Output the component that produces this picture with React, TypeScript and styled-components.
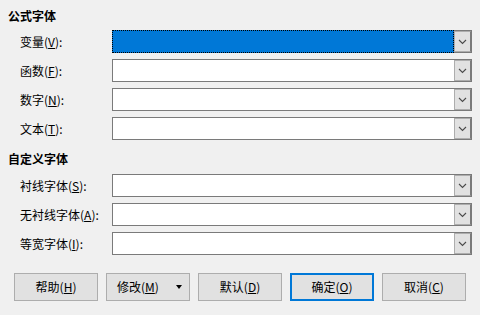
import styled, { createGlobalStyle } from "styled-components";

const GlobalStyle = createGlobalStyle`
  html, body {
    margin: 0;
    padding: 0;
    background: #f0f0f0;
  }
  body {
    font-family: "Noto Sans CJK SC", "Noto Sans", sans-serif;
    font-size: 12px;
    color: #000;
  }
`;

type Field = { label: string; key: string; focused?: boolean };

const formulaFonts: Field[] = [
  { label: "变量", key: "V", focused: true },
  { label: "函数", key: "F" },
  { label: "数字", key: "N" },
  { label: "文本", key: "T" },
];

const customFonts: Field[] = [
  { label: "衬线字体", key: "S" },
  { label: "无衬线字体", key: "A" },
  { label: "等宽字体", key: "I" },
];

const Chevron = () => (
  <svg width="9" height="6" viewBox="0 0 9 6">
    <polyline points="1,1 4.5,4.5 8,1" fill="none" stroke="#4a4a4a" strokeWidth="1.1" />
  </svg>
);

const FieldRow = ({ field }: { field: Field }) => (
  <Row>
    <Label>
      {field.label}(<u>{field.key}</u>):
    </Label>
    <Combo>
      <Edit $focused={field.focused} />
      <DropButton>
        <Chevron />
      </DropButton>
    </Combo>
  </Row>
);

const Caption = ({ text, k }: { text: string; k: string }) => (
  <span>
    {text}(<u>{k}</u>)
  </span>
);

export default function App() {
  return (
    <>
      <GlobalStyle />
      <Dialog>
        <Heading>公式字体</Heading>
        <Rows>
          {formulaFonts.map((f) => (
            <FieldRow key={f.key} field={f} />
          ))}
        </Rows>
        <Heading $second>自定义字体</Heading>
        <Rows>
          {customFonts.map((f) => (
            <FieldRow key={f.key} field={f} />
          ))}
        </Rows>
        <ButtonBar>
          <Button>
            <Caption text="帮助" k="H" />
          </Button>
          <Button $split>
            <Caption text="修改" k="M" />
            <Caret />
          </Button>
          <Button>
            <Caption text="默认" k="D" />
          </Button>
          <Button $default>
            <Caption text="确定" k="O" />
          </Button>
          <Button>
            <Caption text="取消" k="C" />
          </Button>
        </ButtonBar>
      </Dialog>
    </>
  );
}

const Dialog = styled.div`
  width: 480px;
  height: 315px;
  box-sizing: border-box;
  padding: 8px 8px 0 8px;
  display: flex;
  flex-direction: column;
`;

const Heading = styled.div<{ $second?: boolean }>`
  font-weight: 700;
  line-height: 16px;
  height: 16px;
  margin-top: ${(p) => (p.$second ? "11px" : "0")};
  margin-bottom: ${(p) => (p.$second ? "7px" : "6px")};
`;

const Rows = styled.div`
  display: flex;
  flex-direction: column;
  gap: 6px;
`;

const Row = styled.div`
  display: grid;
  grid-template-columns: 92px 360px;
  padding-left: 12px;
  align-items: center;
  height: 23px;
`;

const Label = styled.div`
  line-height: 16px;
  white-space: nowrap;
`;

const Combo = styled.div`
  display: flex;
  height: 23px;
  box-sizing: border-box;
  border: 1px solid #7a7a7a;
  background: #fff;
`;

const Edit = styled.div<{ $focused?: boolean }>`
  flex: 1;
  box-sizing: border-box;
  ${(p) =>
    p.$focused &&
    `
    margin: -1px 0 -1px -1px;
    border: 1px dotted #000;
    background: #0078d7;
    box-shadow: inset 0 0 0 1px #0078d7;
  `}
`;

const DropButton = styled.div`
  width: 17px;
  box-sizing: border-box;
  background: #e1e1e1;
  border: 1px solid #adadad;
  border-right-color: #7a7a7a;
  display: flex;
  align-items: center;
  justify-content: center;
`;

const ButtonBar = styled.div`
  display: flex;
  gap: 8px;
  margin-top: 18px;
  padding-left: 6px;
`;

const Button = styled.div<{ $default?: boolean; $split?: boolean }>`
  width: 84px;
  height: 28px;
  box-sizing: border-box;
  background: #e1e1e1;
  border: ${(p) => (p.$default ? "2px solid #0078d7" : "1px solid #adadad")};
  display: flex;
  align-items: center;
  justify-content: ${(p) => (p.$split ? "flex-start" : "center")};
  padding-left: ${(p) => (p.$split ? "10px" : "0")};
  gap: 17px;
  line-height: 16px;
  white-space: nowrap;
`;

const Caret = styled.span`
  width: 0;
  height: 0;
  border-left: 3.5px solid transparent;
  border-right: 3.5px solid transparent;
  border-top: 4px solid #000;
`;
